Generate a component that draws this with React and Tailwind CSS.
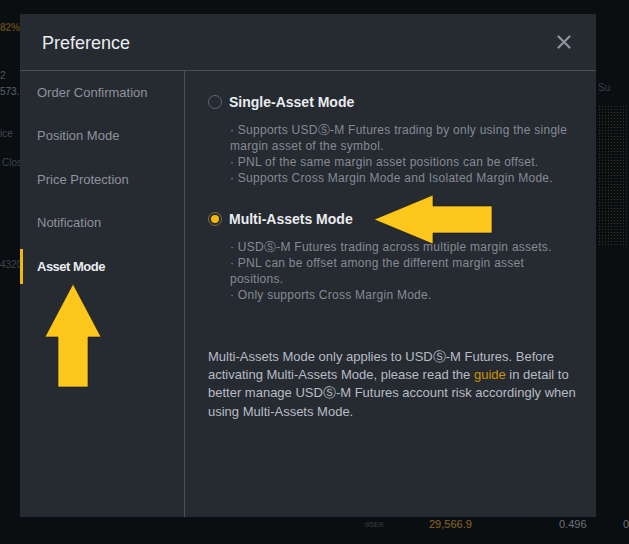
import React from 'react';

const NAV = ['Order Confirmation', 'Position Mode', 'Price Protection', 'Notification', 'Asset Mode'];

const MODES = [
  {
    title: 'Single-Asset Mode',
    selected: false,
    bullets: [
      '· Supports USDⓈ-M Futures trading by only using the single margin asset of the symbol.',
      '· PNL of the same margin asset positions can be offset.',
      '· Supports Cross Margin Mode and Isolated Margin Mode.',
    ],
  },
  {
    title: 'Multi-Assets Mode',
    selected: true,
    bullets: [
      '· USDⓈ-M Futures trading across multiple margin assets.',
      '· PNL can be offset among the different margin asset positions.',
      '· Only supports Cross Margin Mode.',
    ],
  },
];

function Radio({ checked }) {
  if (checked) {
    return (
      <span className="w-[14px] h-[14px] rounded-full border border-[#7d6c48] flex items-center justify-center shrink-0">
        <span className="w-[8px] h-[8px] rounded-full bg-[#f0b90b]" />
      </span>
    );
  }
  return <span className="w-[14px] h-[14px] rounded-full border border-[#5e6673] shrink-0" />;
}

export default function App() {
  return (
    <div
      className="relative w-[629px] h-[544px] bg-[#0b0e11] overflow-hidden text-[#eaecef]"
      style={{ fontFamily: '"Liberation Sans", Arial, sans-serif' }}
    >
      {/* faint trading screen behind the dialog */}
      <div className="absolute left-0 top-[22px] flex flex-col text-[10px] leading-[12px] text-[#4f555e]">
        <span className="font-bold text-[#5a4718]">82%</span>
        <span className="mt-[36px]">2</span>
        <span className="mt-[4px] text-[#5e6470]">573.1</span>
        <span className="mt-[30px] text-[#454b54]">ice</span>
        <span className="mt-[17px] pl-[2px] text-[#3e444c]">Clos</span>
        <span className="mt-[90px] text-[#3e444c]">4320</span>
      </div>
      <div className="absolute left-[598px] top-[82px] flex flex-col gap-[11px]">
        <span className="text-[10px] leading-[12px] text-[#3a3f47]">Su</span>
        <span className="w-[31px] h-[140px] bg-[radial-gradient(#3b3322_1px,transparent_1px)] bg-[length:3px_3px]" />
      </div>
      <div className="absolute left-[365px] top-[518px] flex items-start text-[11px] leading-[13px]">
        <span className="text-[8px] text-[#3a3f47] w-[64px]">95EK</span>
        <span className="text-[#8a6523] w-[130px]">29,566.9</span>
        <span className="text-[#6b717b] w-[64px]">0.496</span>
        <span className="text-[#6b717b]">0</span>
      </div>

      {/* dialog */}
      <div className="absolute left-[20px] top-[14px] w-[576px] h-[503px] bg-[#262a31] flex flex-col">
        <div className="h-[57px] shrink-0 flex items-center justify-between pl-[22px] pr-[25px] border-b border-[#4a4f58]">
          <h1 className="text-[18px] text-[#eaecef] mt-[2px]">Preference</h1>
          <svg width="14" height="14" viewBox="0 0 14 14" fill="none" stroke="#8e949e" strokeWidth="2.2" strokeLinecap="round">
            <path d="M1.5 1.5 12.5 12.5M12.5 1.5 1.5 12.5" />
          </svg>
        </div>

        <div className="flex flex-1 min-h-0">
          <nav className="w-[165px] shrink-0 border-r border-[#4a4f58]">
            {NAV.map((item) => {
              const active = item === 'Asset Mode';
              return (
                <div key={item} className="h-[43.4px] flex items-center relative pl-[17px]">
                  {active && <span className="absolute left-0 top-[4px] w-[3px] h-[35px] bg-[#f0b90b]" />}
                  <span
                    className={
                      active
                        ? 'text-[13px] font-bold tracking-[-0.5px] text-[#eaecef]'
                        : 'text-[13px] text-[#8d939c]'
                    }
                  >
                    {item}
                  </span>
                </div>
              );
            })}
          </nav>

          <div className="flex-1 pl-[23px] pr-[19px] pt-[21px]">
            {MODES.map((mode, i) => (
              <div key={mode.title} className={i > 0 ? 'mt-[23px]' : ''}>
                <div className="flex items-center gap-[7px] h-[20px]">
                  <Radio checked={mode.selected} />
                  <span className="text-[14px] font-bold text-[#eaecef]">{mode.title}</span>
                </div>
                <div
                  className={`pl-[22px] text-[12px] leading-[16px] tracking-[0.26px] text-[#848b96] ${
                    i === 0 ? 'mt-[10px]' : 'mt-[10px]'
                  }`}
                >
                  {mode.bullets.map((b) => (
                    <p key={b}>{b}</p>
                  ))}
                </div>
              </div>
            ))}

            <p className="mt-[45px] text-[13px] leading-[18.2px] text-[#b7bcc4]">
              Multi-Assets Mode only applies to USDⓈ-M Futures. Before activating Multi-Assets Mode, please read the{' '}
              <span className="text-[#c99400]">guide</span> in detail to better manage USDⓈ-M Futures account risk
              accordingly when using Multi-Assets Mode.
            </p>
          </div>
        </div>
      </div>

      {/* annotation arrows */}
      <svg className="absolute left-[374px] top-[195px]" width="119" height="50" viewBox="0 0 119 50">
        <polygon points="0,24.5 59,0 59,11 118,11 118,38 59,38 59,49" fill="#fdc81b" stroke="#1a1a1a" strokeWidth="0.6" strokeLinejoin="round" />
      </svg>
      <svg className="absolute left-[45px] top-[284px]" width="57" height="104" viewBox="0 0 57 104">
        <polygon points="28,0 56,53 43,53 43,103 13,103 13,53 0,53" fill="#fdc81b" stroke="#1a1a1a" strokeWidth="0.6" strokeLinejoin="round" />
      </svg>
    </div>
  );
}
